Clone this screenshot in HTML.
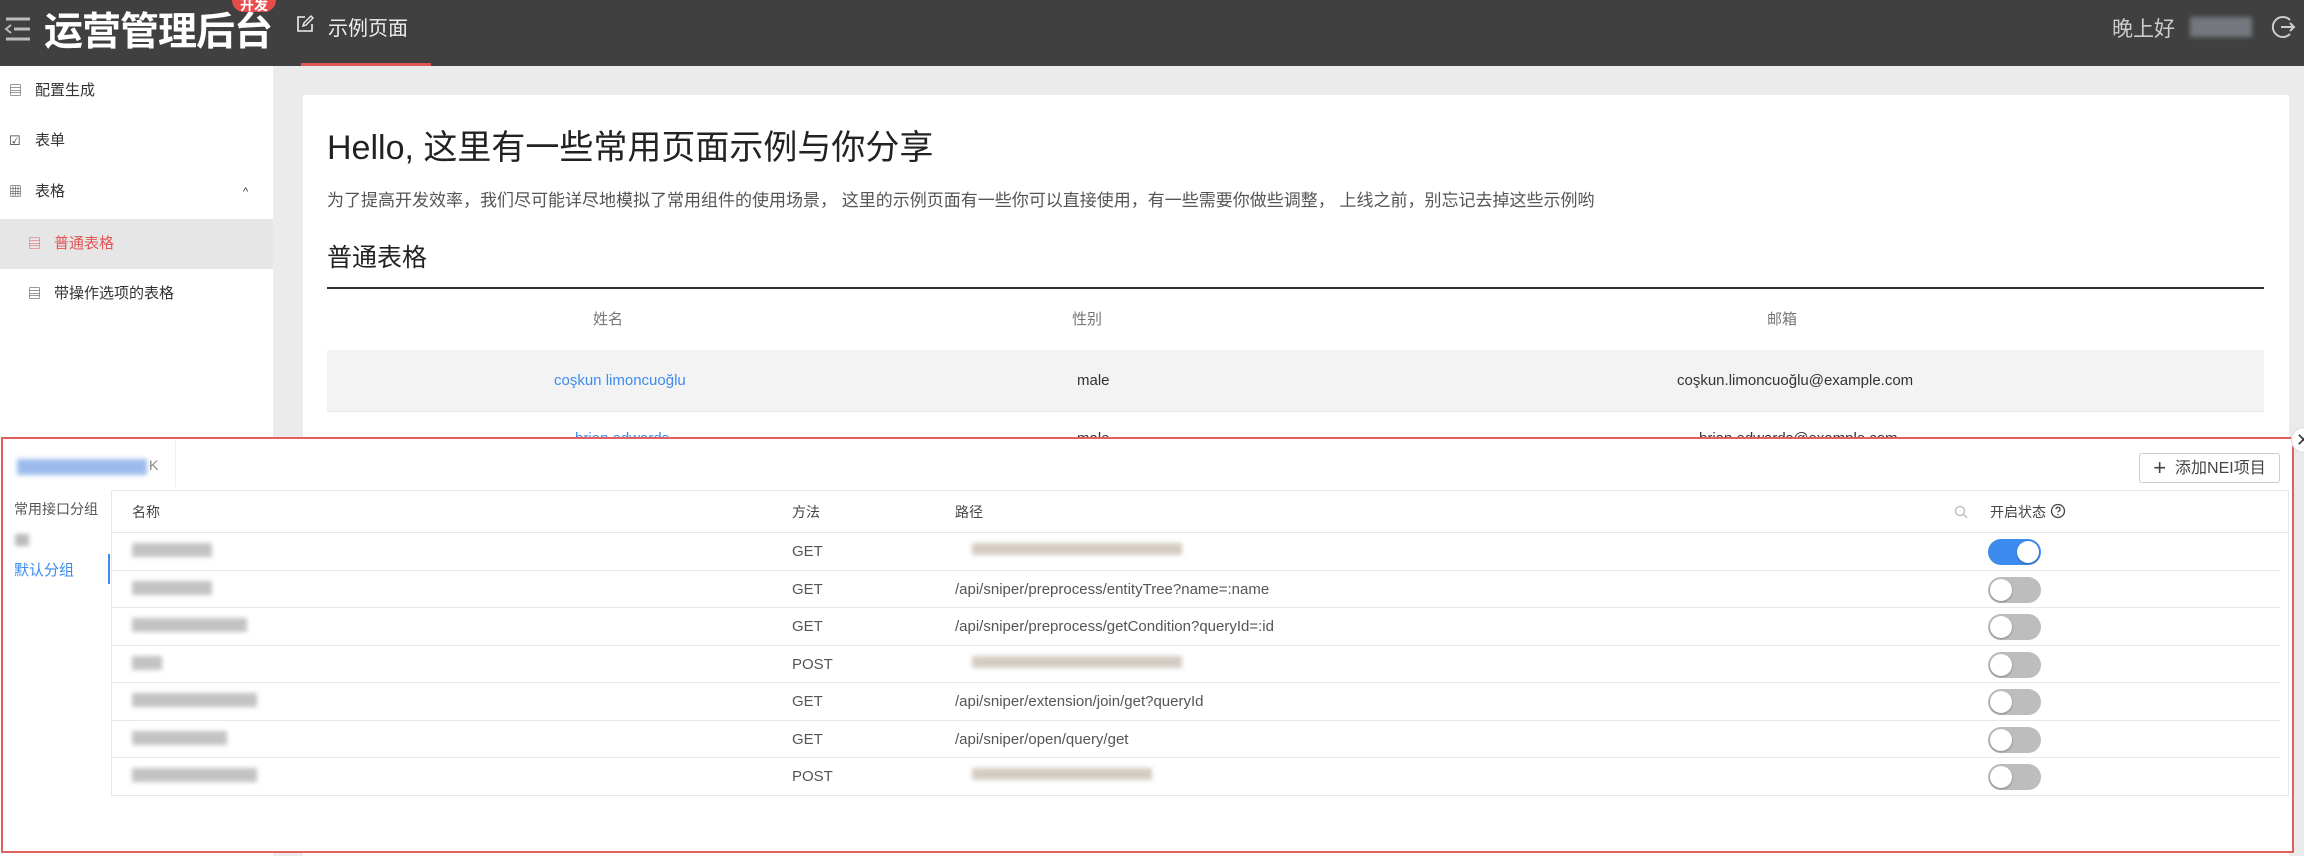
<!DOCTYPE html>
<html><head><meta charset="utf-8"><style>
*{margin:0;padding:0;box-sizing:border-box}
body{width:2304px;height:856px;overflow:hidden;position:relative;background:#ebebeb;font-family:"Liberation Sans","Noto Sans CJK SC",sans-serif;color:#333}
.a{position:absolute}
.hdr{left:0;top:0;width:2304px;height:66px;background:#404040}
.side{left:0;top:66px;width:273px;height:790px;background:#fff}
.si{position:absolute;left:0;width:273px;height:50px;line-height:50px;font-size:15px;color:#333}
.card{left:303px;top:95px;width:1986px;height:761px;background:#fff}
.blur{filter:blur(2.5px)}
.ov{left:1px;top:437px;width:2293px;height:416px;background:#fff;border:2px solid #e06060}
.row{position:absolute;left:0;width:100%;height:37.5px;border-bottom:1px solid #e8e8e8;font-size:15px;color:#555}
.row span{position:absolute;top:10px}
.tg{position:absolute;left:1876px;top:6px;width:53px;height:26px;border-radius:13px;background:#bdbdbd}
.tg:after{content:"";position:absolute;left:2px;top:2px;width:22px;height:22px;border-radius:50%;background:#fff;box-shadow:0 1px 2px rgba(0,0,0,.3)}
.tg.on{background:#3d8bef}.tg.on:after{left:29px}
</style></head><body>
<div class="a hdr">
 <svg class="a" style="left:4px;top:16px" width="28" height="26" viewBox="0 0 28 26"><g stroke="#bbb" stroke-width="3"><line x1="2" y1="3" x2="26" y2="3"/><line x1="10" y1="13" x2="26" y2="13"/><line x1="2" y1="23" x2="26" y2="23"/></g><path d="M7 9 L2 13 L7 17" fill="none" stroke="#bbb" stroke-width="2"/></svg>
 <div class="a" style="left:44px;top:9px;font-size:39px;font-weight:bold;color:#fff;letter-spacing:-1px;line-height:48px">运营管理后台</div>
 <div class="a" style="left:232px;top:-12px;width:44px;height:24px;border-radius:12px;background:#e74c4c;color:#fff;font-size:14px;text-align:center;line-height:34px;font-weight:bold">开发</div>
 <svg class="a" style="left:296px;top:15px" width="18" height="18" viewBox="0 0 18 18"><path d="M9 2H2v14h14V9" fill="none" stroke="#eee" stroke-width="1.6"/><path d="M7 11l1-3 7-7 2 2-7 7z" fill="none" stroke="#eee" stroke-width="1.4"/></svg>
 <div class="a" style="left:328px;top:12px;font-size:20px;color:#eee">示例页面</div>
 <div class="a" style="left:301px;top:63px;width:130px;height:3px;background:#e35656"></div>
 <div class="a" style="left:2112px;top:13px;font-size:21px;color:#ccc">晚上好</div>
 <div class="a blur" style="left:2190px;top:17px;width:62px;height:20px;background:#8a8f99;opacity:.7"></div>
 <svg class="a" style="left:2271px;top:14px" width="26" height="26" viewBox="0 0 26 26"><path d="M19 6A10 10 0 1 0 19 20" fill="none" stroke="#ccc" stroke-width="2"/><path d="M10 13h13M19 9l4 4-4 4" fill="none" stroke="#ccc" stroke-width="2"/></svg>
</div>
<div class="a side">
 <div class="si" style="top:0"><span style="position:absolute;left:9px;top:0;font-size:13px">▤</span><span style="position:absolute;left:35px">配置生成</span></div>
 <div class="si" style="top:50px"><span style="position:absolute;left:9px;font-size:13px">☑</span><span style="position:absolute;left:35px">表单</span></div>
 <div class="si" style="top:101px"><span style="position:absolute;left:9px;font-size:13px">▦</span><span style="position:absolute;left:35px">表格</span><span style="position:absolute;left:243px;font-size:11px">^</span></div>
 <div class="si" style="top:153px;background:#e6e6e6;color:#e35656"><span style="position:absolute;left:28px;font-size:13px">▤</span><span style="position:absolute;left:54px">普通表格</span></div>
 <div class="si" style="top:203px"><span style="position:absolute;left:28px;font-size:13px">▤</span><span style="position:absolute;left:54px">带操作选项的表格</span></div>
</div>
<div class="a card">
 <div class="a" style="left:24px;top:25px;font-size:34px;color:#222">Hello, 这里有一些常用页面示例与你分享</div>
 <div class="a" style="left:24px;top:91px;font-size:17px;color:#555">为了提高开发效率，我们尽可能详尽地模拟了常用组件的使用场景， 这里的示例页面有一些你可以直接使用，有一些需要你做些调整， 上线之前，别忘记去掉这些示例哟</div>
 <div class="a" style="left:24px;top:143px;font-size:25px;color:#222">普通表格</div>
 <div class="a" style="left:24px;top:192px;width:1937px;height:2px;background:#333"></div>
 <div class="a" style="left:24px;top:213px;width:1937px;font-size:15px;color:#777"><span class="a" style="left:266px">姓名</span><span class="a" style="left:745px">性别</span><span class="a" style="left:1440px">邮箱</span></div>
 <div class="a" style="left:24px;top:255px;width:1937px;height:62px;background:#f3f3f3;border-bottom:1px solid #e6e6e6;font-size:15px">
  <span class="a" style="left:227px;top:22px;color:#3d8bef">coşkun limoncuoğlu</span><span class="a" style="left:750px;top:22px">male</span><span class="a" style="left:1350px;top:22px">coşkun.limoncuoğlu@example.com</span></div>
 <div class="a" style="left:24px;top:335px;width:1937px;font-size:15px"><span class="a" style="left:248px;color:#3d8bef">brian edwards</span><span class="a" style="left:750px">male</span><span class="a" style="left:1372px">brian.edwards@example.com</span></div>
</div>
<div class="a ov">
 <div class="a blur" style="left:14px;top:20px;width:130px;height:16px;background:#5b8fe0;opacity:.6"></div>
 <div class="a" style="left:146px;top:18px;font-size:14px;color:#888">K</div>
 <div class="a" style="left:172px;top:0;width:1px;height:48px;background:#eee"></div>
 <div class="a" style="left:2136px;top:14px;width:141px;height:30px;border:1px solid #ccc;border-radius:3px;font-size:16px;color:#444;line-height:28px;text-align:center"><b style="font-size:22px;font-weight:normal;vertical-align:-2px">+</b>&nbsp; 添加NEI项目</div>
 <div class="a" style="left:11px;top:60px;font-size:14px;color:#555">常用接口分组</div>
 <div class="a blur" style="left:12px;top:95px;width:14px;height:12px;background:#777;opacity:.5"></div>
 <div class="a" style="left:11px;top:120px;font-size:15px;color:#3d8bef">默认分组</div>
 <div class="a" style="left:105px;top:115px;width:2px;height:30px;background:#3d8bef"></div>
 <div class="a" style="left:108px;top:51px;width:2178px;height:306px;border:1px solid #e8e8e8">
  <div class="row" style="top:0;height:42px;color:#444;font-size:14px"><span style="left:20px;top:11px">名称</span><span style="left:680px;top:11px">方法</span><span style="left:843px;top:11px">路径</span>
   <svg style="position:absolute;left:1842px;top:14px" width="14" height="14" viewBox="0 0 14 14"><circle cx="6" cy="6" r="4.5" fill="none" stroke="#bbb" stroke-width="1.3"/><line x1="9.3" y1="9.3" x2="13" y2="13" stroke="#bbb" stroke-width="1.3"/></svg>
   <span style="left:1878px;top:11px">开启状态</span>
   <svg style="position:absolute;left:1938px;top:12px" width="16" height="16" viewBox="0 0 16 16"><circle cx="8" cy="8" r="6.5" fill="none" stroke="#444" stroke-width="1.3"/><path d="M6 6.3a2 2 0 1 1 2.6 1.9c-.5.2-.6.5-.6 1.2" fill="none" stroke="#444" stroke-width="1.3"/><circle cx="8" cy="11.5" r=".8" fill="#444"/></svg></div>
  <div style="position:absolute;top:42px;left:0;width:2168px">
   <div class="row" style="top:0"><span class="blur" style="left:20px;width:80px;height:14px;background:#888;opacity:.5"></span><span style="left:680px">GET</span><span class="blur" style="left:860px;width:210px;height:12px;background:#a98;opacity:.5"></span><div class="tg on"></div></div>
   <div class="row" style="top:37.5px"><span class="blur" style="left:20px;width:80px;height:14px;background:#888;opacity:.5"></span><span style="left:680px">GET</span><span style="left:843px">/api/sniper/preprocess/entityTree?name=:name</span><div class="tg"></div></div>
   <div class="row" style="top:75px"><span class="blur" style="left:20px;width:115px;height:14px;background:#888;opacity:.5"></span><span style="left:680px">GET</span><span style="left:843px">/api/sniper/preprocess/getCondition?queryId=:id</span><div class="tg"></div></div>
   <div class="row" style="top:112.5px"><span class="blur" style="left:20px;width:30px;height:14px;background:#888;opacity:.5"></span><span style="left:680px">POST</span><span class="blur" style="left:860px;width:210px;height:12px;background:#a98;opacity:.5"></span><div class="tg"></div></div>
   <div class="row" style="top:150px"><span class="blur" style="left:20px;width:125px;height:14px;background:#888;opacity:.5"></span><span style="left:680px">GET</span><span style="left:843px">/api/sniper/extension/join/get?queryId</span><div class="tg"></div></div>
   <div class="row" style="top:187.5px"><span class="blur" style="left:20px;width:95px;height:14px;background:#888;opacity:.5"></span><span style="left:680px">GET</span><span style="left:843px">/api/sniper/open/query/get</span><div class="tg"></div></div>
   <div class="row" style="top:225px;border:none"><span class="blur" style="left:20px;width:125px;height:14px;background:#888;opacity:.5"></span><span style="left:680px">POST</span><span class="blur" style="left:860px;width:180px;height:12px;background:#a98;opacity:.5"></span><div class="tg"></div></div>
  </div>
 </div>
</div>
<div class="a" style="left:2291px;top:427px;width:26px;height:26px;border-radius:50%;background:#fff;border:1px solid #ddd;font-size:18px;line-height:24px;padding-left:4px;color:#333">✕</div>
</body></html>
